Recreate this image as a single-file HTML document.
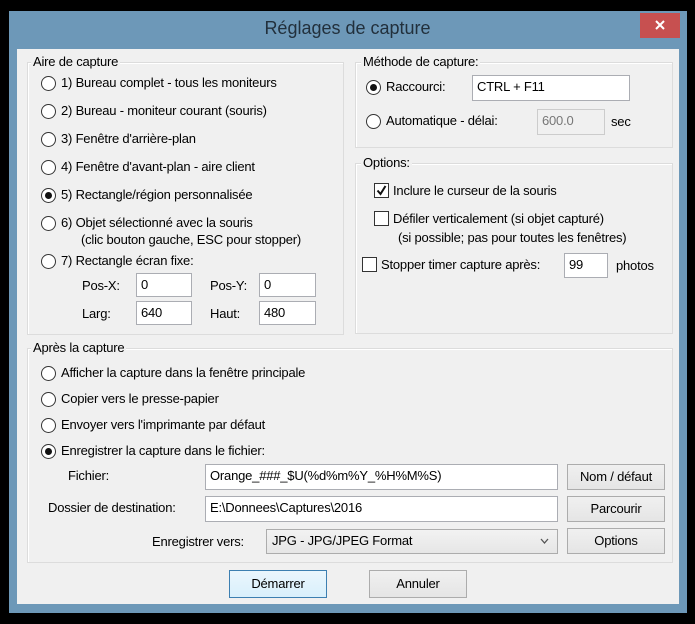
<!DOCTYPE html>
<html><head><meta charset="utf-8"><style>
*{margin:0;padding:0;box-sizing:border-box}
body{width:695px;height:624px;background:#000;position:relative;overflow:hidden;font-family:"Liberation Sans",Arial,sans-serif;font-size:13px;color:#000;letter-spacing:-0.2px}
.a{position:absolute;white-space:nowrap}
.frame{position:absolute;left:9px;top:11px;width:678px;height:602px;background:#6d98b8}
.client{position:absolute;left:17px;top:49px;width:662px;height:555px;background:#f0f0f0}
.title{left:0;width:695px;top:18px;text-align:center;font-size:18px;color:#22303c;letter-spacing:0}
.close{left:640px;top:13px;width:40px;height:25px;background:#c75050}
.grp{position:absolute;border:1px solid #dcdcdc;box-shadow:inset 1px 1px 0 #fff}
.gl{position:absolute;background:#f0f0f0;padding:0 2px}
.r{position:absolute;width:15px;height:15px;border:1px solid #333;border-radius:50%;background:#fff}
.r.on::after{content:"";position:absolute;left:3px;top:3px;width:7px;height:7px;border-radius:50%;background:#111}
.c{position:absolute;width:15px;height:15px;border:1px solid #333;background:#fff}
.in{position:absolute;border:1px solid #abadb3;background:#fff;padding:2px 4px;line-height:18px}
.btn{position:absolute;border:1px solid #acacac;background:linear-gradient(#f0f0f0,#e5e5e5);text-align:center}
</style></head><body>
<div class="frame"></div>
<div class="client"></div>
<div class="a title">Réglages de capture</div>
<div class="a close"><svg width="40" height="25"><path d="M16 8l8 8M24 8l-8 8" stroke="#fff" stroke-width="2"/></svg></div>

<div class="grp" style="left:27px;top:62px;width:317px;height:273px"></div>
<div class="gl a" style="left:31px;top:54px">Aire de capture</div>
<div class="grp" style="left:355px;top:62px;width:318px;height:86px"></div>
<div class="gl a" style="left:361px;top:54px">Méthode de capture:</div>
<div class="grp" style="left:355px;top:163px;width:318px;height:171px"></div>
<div class="gl a" style="left:361px;top:155px">Options:</div>
<div class="grp" style="left:27px;top:348px;width:646px;height:215px"></div>
<div class="gl a" style="left:31px;top:340px">Après la capture</div>

<div class="r" style="left:41px;top:76px"></div><div class="a" style="left:61px;top:75px">1) Bureau complet - tous les moniteurs</div>
<div class="r" style="left:41px;top:104px"></div><div class="a" style="left:61px;top:103px">2) Bureau - moniteur courant (souris)</div>
<div class="r" style="left:41px;top:132px"></div><div class="a" style="left:61px;top:131px">3) Fenêtre d'arrière-plan</div>
<div class="r" style="left:41px;top:160px"></div><div class="a" style="left:61px;top:159px">4) Fenêtre d'avant-plan - aire client</div>
<div class="r on" style="left:41px;top:188px"></div><div class="a" style="left:61px;top:187px">5) Rectangle/région personnalisée</div>
<div class="r" style="left:41px;top:216px"></div><div class="a" style="left:61px;top:215px">6) Objet sélectionné avec la souris</div>
<div class="a" style="left:81px;top:232px">(clic bouton gauche, ESC pour stopper)</div>
<div class="r" style="left:41px;top:254px"></div><div class="a" style="left:61px;top:253px">7) Rectangle écran fixe:</div>
<div class="a" style="left:82px;top:278px">Pos-X:</div><div class="in" style="left:136px;top:273px;width:56px;height:24px">0</div>
<div class="a" style="left:210px;top:278px">Pos-Y:</div><div class="in" style="left:259px;top:273px;width:57px;height:24px">0</div>
<div class="a" style="left:82px;top:306px">Larg:</div><div class="in" style="left:136px;top:301px;width:56px;height:24px">640</div>
<div class="a" style="left:210px;top:306px">Haut:</div><div class="in" style="left:259px;top:301px;width:57px;height:24px">480</div>

<div class="r on" style="left:366px;top:80px"></div><div class="a" style="left:386px;top:79px">Raccourci:</div>
<div class="in" style="left:472px;top:75px;width:158px;height:26px">CTRL + F11</div>
<div class="r" style="left:366px;top:114px"></div><div class="a" style="left:386px;top:113px">Automatique - délai:</div>
<div class="in" style="left:537px;top:109px;width:68px;height:26px;background:#f0f0f0;border-color:#ccc;color:#777">600.0</div>
<div class="a" style="left:611px;top:114px">sec</div>

<div class="c" style="left:374px;top:183px"><svg width="13" height="13"><path d="M2.5 6.5l3 3.5 5-8" stroke="#111" stroke-width="2" fill="none"/></svg></div><div class="a" style="left:393px;top:183px">Inclure le curseur de la souris</div>
<div class="c" style="left:374px;top:211px"></div><div class="a" style="left:393px;top:211px">Défiler verticalement (si objet capturé)</div>
<div class="a" style="left:398px;top:230px">(si possible; pas pour toutes les fenêtres)</div>
<div class="c" style="left:362px;top:257px"></div><div class="a" style="left:381px;top:257px">Stopper timer capture après:</div>
<div class="in" style="left:564px;top:253px;width:44px;height:25px">99</div>
<div class="a" style="left:616px;top:258px">photos</div>

<div class="r" style="left:41px;top:366px"></div><div class="a" style="left:61px;top:365px">Afficher la capture dans la fenêtre principale</div>
<div class="r" style="left:41px;top:392px"></div><div class="a" style="left:61px;top:391px">Copier vers le presse-papier</div>
<div class="r" style="left:41px;top:418px"></div><div class="a" style="left:61px;top:417px">Envoyer vers l'imprimante par défaut</div>
<div class="r on" style="left:41px;top:444px"></div><div class="a" style="left:61px;top:443px">Enregistrer la capture dans le fichier:</div>
<div class="a" style="left:68px;top:468px">Fichier:</div>
<div class="in" style="left:205px;top:464px;width:353px;height:26px">Orange_###_$U(%d%m%Y_%H%M%S)</div>
<div class="btn" style="left:567px;top:464px;width:98px;height:26px;line-height:24px">Nom / défaut</div>
<div class="a" style="left:48px;top:500px">Dossier de destination:</div>
<div class="in" style="left:205px;top:496px;width:353px;height:26px">E:\Donnees\Captures\2016</div>
<div class="btn" style="left:567px;top:496px;width:98px;height:26px;line-height:24px">Parcourir</div>
<div class="a" style="left:152px;top:534px">Enregistrer vers:</div>
<div class="in" style="left:266px;top:529px;width:292px;height:25px;background:linear-gradient(#f2f2f2,#e6e6e6);border-color:#acacac;padding-left:5px">JPG - JPG/JPEG Format<svg style="position:absolute;right:8px;top:8px" width="9" height="7"><path d="M1 1l3.5 4 3.5-4" stroke="#555" stroke-width="1.3" fill="none"/></svg></div>
<div class="btn" style="left:567px;top:528px;width:98px;height:26px;line-height:24px">Options</div>

<div class="btn" style="left:229px;top:570px;width:98px;height:28px;line-height:26px;border-color:#3c7fb1;background:linear-gradient(#eaf6fd,#d9f0fc)">Démarrer</div>
<div class="btn" style="left:369px;top:570px;width:98px;height:28px;line-height:26px">Annuler</div>
</body></html>
